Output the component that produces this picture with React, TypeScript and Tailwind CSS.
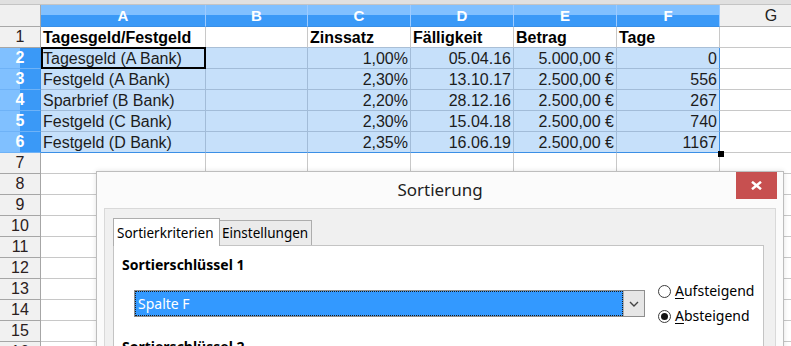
import React from "react";

type Row = { n: number; cells: string[]; sel: boolean; bold?: boolean };

const empty = ["", "", "", "", "", "", ""];
const rows: Row[] = [
  { n: 1, cells: ["Tagesgeld/Festgeld", "", "Zinssatz", "Fälligkeit", "Betrag", "Tage", ""], sel: false, bold: true },
  { n: 2, cells: ["Tagesgeld (A Bank)", "", "1,00%", "05.04.16", "5.000,00 €", "0", ""], sel: true },
  { n: 3, cells: ["Festgeld (A Bank)", "", "2,30%", "13.10.17", "2.500,00 €", "556", ""], sel: true },
  { n: 4, cells: ["Sparbrief (B Bank)", "", "2,20%", "28.12.16", "2.500,00 €", "267", ""], sel: true },
  { n: 5, cells: ["Festgeld (C Bank)", "", "2,30%", "15.04.18", "2.500,00 €", "740", ""], sel: true },
  { n: 6, cells: ["Festgeld (D Bank)", "", "2,35%", "16.06.19", "2.500,00 €", "1167", ""], sel: true },
  ...[7, 8, 9, 10, 11, 12, 13, 14, 15, 16].map((n) => ({ n, cells: empty, sel: false })),
];

const letters = ["A", "B", "C", "D", "E", "F", "G"];

function DataCell({ row, c }: { row: Row; c: number }) {
  const text = row.cells[c];
  const selected = row.sel && c < 6;
  const left = c <= 1 || row.bold;
  const cls = [
    "relative border-r border-b px-[2px] leading-[21px] text-[16px] whitespace-nowrap",
    left ? "text-left" : "text-right",
    row.bold ? "font-bold text-black" : "text-[#1c1c1c]",
    selected ? "bg-[#c6e0fa] border-[#a2bcd8]" : "bg-white border-[#c8c8c8]",
    selected && c === 5 ? "border-r-[#3b8fe6]" : "",
    selected && row.n === 6 ? "border-b-[#3b8fe6]" : "",
    row.n === 1 && c < 6 ? "border-b-[#aabfd6]" : "",
  ].join(" ");
  return (
    <div className={cls}>
      {text}
      {row.n === 2 && c === 0 && (
        <div className="absolute -top-px -bottom-px left-0 -right-px border-2 border-black" />
      )}
      {row.n === 6 && c === 5 && (
        <div className="absolute -right-[5px] -bottom-[5px] w-[6px] h-[6px] bg-black z-10" />
      )}
    </div>
  );
}

function Radio({ label, checked }: { label: string; checked?: boolean }) {
  return (
    <div className="flex items-center h-[20px]">
      <div className="w-[13px] h-[13px] rounded-full border border-[#3c3c3c] bg-white flex items-center justify-center">
        {checked && <div className="w-[7px] h-[7px] rounded-full bg-[#111]" />}
      </div>
      <span className="ml-[4px] text-[14px] leading-[20px] text-black">
        <span className="underline underline-offset-2">{label[0]}</span>
        {label.slice(1)}
      </span>
    </div>
  );
}

export default function App() {
  return (
    <div className="relative w-[791px] h-[346px] overflow-hidden bg-white font-['Liberation_Sans',Arial,sans-serif]">
      <div className="h-[5px] bg-[#e0e0e0] border-b border-[#c4c4c4]" />
      <div className="grid grid-cols-[41px_165px_102px_103px_103px_103px_103px_103px] grid-rows-[22px] auto-rows-[21px]">
        <div className="bg-[#f0f0f0] border-r border-b border-[#a8a8a8]" />
        {letters.map((l, i) =>
          i < 6 ? (
            <div
              key={l}
              className="bg-linear-to-b from-[#80c0ff] from-50% to-[#3a99f7] to-50% border-r border-b border-r-[#9dcbff] border-b-[#3a8fe6] flex items-center justify-center text-white font-bold text-[15px] leading-[21px]"
            >
              {l}
            </div>
          ) : (
            <div
              key={l}
              className="bg-[#f0f0f0] border-r border-b border-[#b4b4b4] flex items-center justify-center text-[#222] text-[16px] leading-[21px]"
            >
              {l}
            </div>
          )
        )}
        {rows.map((row) => (
          <React.Fragment key={row.n}>
            {row.sel ? (
              <div className="bg-linear-to-r from-[#80c0ff] from-50% to-[#3a99f7] to-50% border-r border-b border-b-[#6eb2f7] border-r-[#3a8fe6] flex items-center justify-center text-white font-bold text-[16px]">
                {row.n}
              </div>
            ) : (
              <div className="bg-[#f1f1f1] border-r border-b border-[#a6a6a6] flex items-center justify-center text-[#2a2020] text-[16px]">
                {row.n}
              </div>
            )}
            {letters.map((_, c) => (
              <DataCell key={c} row={row} c={c} />
            ))}
          </React.Fragment>
        ))}
      </div>

      <div className="absolute left-[96px] top-[171px] w-[688px] h-[200px] border border-[#bdbdbd] bg-[#fbfbfb] font-['Noto_Sans',sans-serif] shadow-[0_0_5px_rgba(0,0,0,0.12)]">
        <div className="relative h-[36px] text-center text-[17px] leading-[36px] text-[#1e1e1e]">
          Sortierung
          <div className="absolute top-0 right-[6px] w-[41px] h-[27px] bg-[#c75050] flex items-center justify-center">
            <svg width="11" height="9" viewBox="0 0 11 9">
              <path d="M1 0.8 L10 8.2 M10 0.8 L1 8.2" stroke="white" strokeWidth="2.5" fill="none" />
            </svg>
          </div>
        </div>
        <div className="mx-[7px] h-[200px] border border-[#d9d9d9] bg-[#f0f0f0] pt-[9px] pl-[8px]">
          <div className="flex items-end h-[27px]">
            <div className="relative z-10 -mb-px h-[28px] w-[107px] bg-white border border-b-0 border-[#adadad] pl-[3px] pt-[4px] text-[13.5px] leading-[20px] text-black whitespace-nowrap">
              Sortierkriterien
            </div>
            <div className="h-[25px] w-[92px] bg-[#ebebeb] border border-l-0 border-b-0 border-[#adadad] pl-[2px] pt-[2px] text-[13.5px] leading-[20px] text-black whitespace-nowrap">
              Einstellungen
            </div>
          </div>
          <div className="w-[651px] h-[200px] bg-white border border-[#c4c4c4] pl-[8px] pt-[9px]">
            <div className="text-[14px] font-bold leading-[20px] text-black">Sortierschlüssel 1</div>
            <div className="mt-[6px] flex items-center">
              <div className="ml-[12px] w-[511px] h-[27px] flex border border-[#8e8e8e] bg-white">
                <div className="flex-1 bg-[#3399ff] border border-dotted border-[#1a1a1a] pl-[2px] text-[14px] leading-[23px] text-white">
                  Spalte F
                </div>
                <div className="w-[21px] bg-[#e6e6e6] border-l border-[#adadad] flex items-center justify-center">
                  <svg width="10" height="6" viewBox="0 0 10 6">
                    <path d="M1 1 L5 5 L9 1" stroke="#444" strokeWidth="1.4" fill="none" />
                  </svg>
                </div>
              </div>
              <div className="ml-[13px] flex flex-col gap-[5px]">
                <Radio label="Aufsteigend" />
                <Radio label="Absteigend" checked />
              </div>
            </div>
            <div className="mt-[11px] text-[14px] font-bold leading-[20px] text-black">Sortierschlüssel 2</div>
          </div>
        </div>
      </div>
    </div>
  );
}
